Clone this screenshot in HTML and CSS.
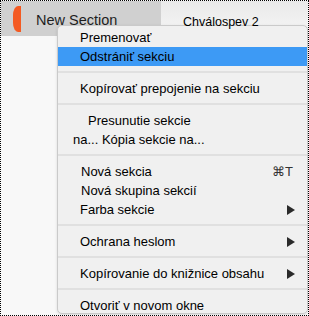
FILE: index.html
```html
<!DOCTYPE html>
<html lang="sk">
<head>
<meta charset="utf-8">
<title>Menu sekcie</title>
<link rel="stylesheet" href="styles.css">
</head>
<body>
<div class="app">
  <div class="tabbar">
    <div class="tab active">
      <span class="marker"></span>
      <span class="tab-label">New Section</span>
    </div>
    <div class="tab page">
      <span class="page-label">Chválospev 2</span>
    </div>
  </div>
  <div class="content"></div>

  <div class="menu">
    <div class="item">Premenovať</div>
    <div class="item selected">Odstrániť sekciu</div>
    <div class="sep"></div>
    <div class="item">Kopírovať prepojenie na sekciu</div>
    <div class="sep"></div>
    <div class="item indent-more">Presunutie sekcie</div>
    <div class="item indent-less">na... Kópia sekcie na...</div>
    <div class="sep"></div>
    <div class="item nudge"><span class="label">Nová sekcia</span><span class="shortcut">⌘T</span></div>
    <div class="item nudge">Nová skupina sekcií</div>
    <div class="item"><span class="label">Farba sekcie</span><svg class="arrow" viewBox="0 0 8 10"><path d="M0 0 L8 5 L0 10 Z"/></svg></div>
    <div class="sep"></div>
    <div class="item"><span class="label">Ochrana heslom</span><svg class="arrow" viewBox="0 0 8 10"><path d="M0 0 L8 5 L0 10 Z"/></svg></div>
    <div class="sep"></div>
    <div class="item"><span class="label">Kopírovanie do knižnice obsahu</span><svg class="arrow" viewBox="0 0 8 10"><path d="M0 0 L8 5 L0 10 Z"/></svg></div>
    <div class="sep"></div>
    <div class="item">Otvoriť v novom okne</div>
  </div>
</div>
</body>
</html>
```

FILE: styles.css
```css
* { box-sizing: border-box; }
html, body { margin: 0; padding: 0; }
body {
  width: 309px;
  height: 316px;
  font-family: "Liberation Sans", Arial, sans-serif;
  color: #000;
}
.app {
  position: relative;
  width: 309px;
  height: 316px;
  border: 1px dotted #000;
  background: #f8f8f8;
  overflow: hidden;
  display: flex;
  flex-direction: column;
}
.tabbar {
  display: flex;
  height: 35px;
  flex: none;
}
.tab.active {
  width: 160px;
  background: #d0d0d0;
  display: flex;
  align-items: flex-start;
  padding: 5px 0 0 12px;
}
.marker {
  width: 8px;
  height: 26px;
  background: #f45a22;
  border-radius: 5px 0 0 5px / 9px 0 0 9px;
  flex: none;
}
.tab-label {
  font-size: 14.5px;
  color: #1e1e1e;
  margin: 6px 0 0 15px;
  line-height: 16px;
}
.tab.page {
  flex: 1;
  background: linear-gradient(#e9e9e9, #f6f6f6);
  padding: 11px 0 0 22px;
}
.page-label {
  position: relative;
  z-index: 2;
  display: inline-block;
  font-size: 12.5px;
  line-height: 14px;
  color: #000;
}
.content { flex: 1; background: #f8f8f8; }

.menu {
  position: absolute;
  z-index: 1;
  left: 56px;
  top: 24px;
  width: 251px;
  height: 289px;
  background: #f0f0f0;
  border: 1px solid #cacaca;
  border-radius: 5px;
  padding: 2px 0 0 0;
  box-shadow: 0 1px 3px rgba(0,0,0,0.12);
}
.item {
  height: 19px;
  display: flex;
  align-items: center;
  padding: 0 12px 0 22px;
  font-size: 13px;
  line-height: 15px;
  color: #000;
  white-space: nowrap;
}
.item .label { flex: 1; }
.item.selected {
  background: #3d9af5;
  color: #000;
}
.item.indent-more { padding-left: 30px; }
.item.indent-less { padding-left: 15px; }
.item.nudge { padding-left: 23px; }
.shortcut {
  font-size: 13px;
  color: #333;
  margin-right: 2px;
}
.arrow {
  width: 8px;
  height: 10px;
  fill: #2a2a2a;
  flex: none;
}
.sep {
  height: 2px;
  background: #e0e0e0;
  margin: 5px 0 6px 0;
}
```
